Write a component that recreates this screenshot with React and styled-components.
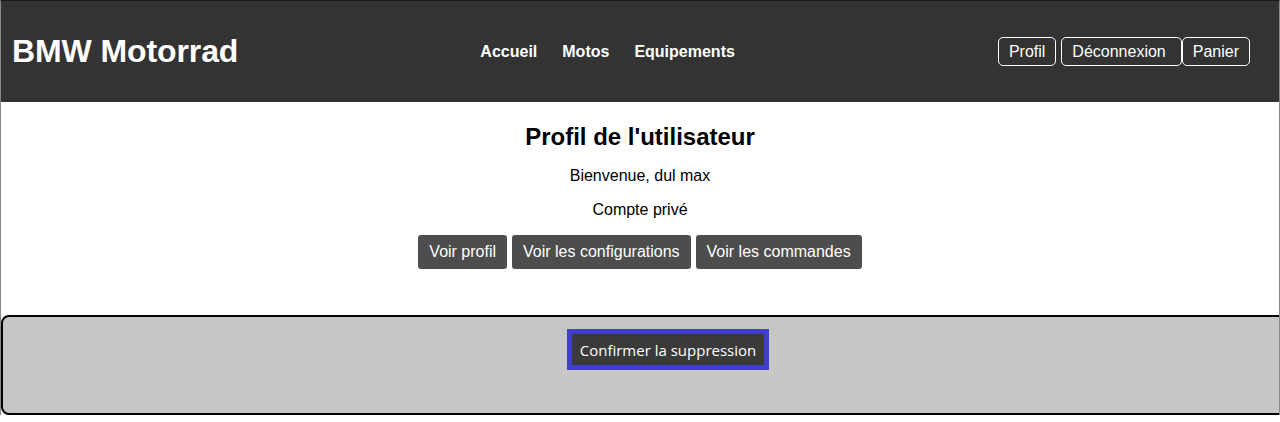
import React from "react";
import styled, { createGlobalStyle } from "styled-components";

const Global = createGlobalStyle`
  html, body { margin: 0; padding: 0; background: #fff; }
  body { font-family: "Liberation Sans", Arial, sans-serif; font-size: 16px; color: #000; }
`;

const Frame = styled.div`
  border-top: 1px solid #1a1a1a;
  border-left: 1px solid #8a8a8a;
  border-right: 1px solid #8a8a8a;
  overflow: hidden;
  height: 414px;
`;

const Header = styled.header`
  display: flex;
  align-items: center;
  justify-content: space-between;
  height: 101px;
  padding: 0 29px 0 11px;
  background: #333333;
  color: #fff;
`;

const Brand = styled.h1`
  margin: 0;
  font-size: 32px;
  font-weight: bold;
  color: #fff;
  letter-spacing: -0.1px;
`;

const Nav = styled.nav`
  display: flex;
  gap: 25px;
  padding-right: 21px;
  padding-top: 1px;
`;

const NavLink = styled.a`
  color: #fff;
  font-weight: bold;
  font-size: 16px;
  text-decoration: none;
`;

const Actions = styled.div`
  display: flex;
  align-items: center;
`;

const OutlineButton = styled.a`
  display: inline-block;
  box-sizing: border-box;
  height: 29px;
  line-height: 27px;
  padding: 0 ${(p) => p.$padRight || 10}px 0 10px;
  margin-right: ${(p) => p.$gap || 0}px;
  border: 1px solid #fff;
  border-radius: 5px;
  color: #fff;
  font-size: 16px;
  text-decoration: none;
`;

const Main = styled.main`
  text-align: center;
`;

const Title = styled.h2`
  margin: 21px 0 16px;
  font-size: 24px;
  font-weight: bold;
`;

const Line = styled.p`
  margin: 16px 0;
  font-size: 16px;
`;

const ButtonRow = styled.div`
  display: flex;
  justify-content: center;
  gap: 5px;
`;

const DarkButton = styled.button`
  height: 34px;
  padding: 0 11px;
  border: none;
  border-radius: 3px;
  background: #4d4d4d;
  color: #fff;
  font-family: "Liberation Sans", Arial, sans-serif;
  font-size: 16px;
`;

const Card = styled.section`
  box-sizing: content-box;
  width: 100%;
  height: 84px;
  margin-top: 46px;
  padding: 12px 26px 0;
  border: 2px solid #000;
  border-radius: 8px;
  background: #c6c6c6;
  display: flex;
  justify-content: center;
  align-items: flex-start;
`;

const ConfirmButton = styled.button`
  height: 41px;
  padding: 0 8px;
  border: 5px solid #3f3fc9;
  border-radius: 0;
  background: #3a3a3a;
  color: #fff;
  font-family: "Open Sans", "Noto Sans", sans-serif;
  font-size: 15px;
`;

export default function App() {
  return (
    <>
      <Global />
      <Frame>
        <Header>
          <Brand>BMW Motorrad</Brand>
          <Nav>
            <NavLink href="#">Accueil</NavLink>
            <NavLink href="#">Motos</NavLink>
            <NavLink href="#">Equipements</NavLink>
          </Nav>
          <Actions>
            <OutlineButton href="#" $gap={5}>Profil</OutlineButton>
            <OutlineButton href="#" $padRight={15}>Déconnexion</OutlineButton>
            <OutlineButton href="#">Panier</OutlineButton>
          </Actions>
        </Header>
        <Main>
          <Title>Profil de l'utilisateur</Title>
          <Line>Bienvenue, dul max</Line>
          <Line>Compte privé</Line>
          <ButtonRow>
            <DarkButton>Voir profil</DarkButton>
            <DarkButton>Voir les configurations</DarkButton>
            <DarkButton>Voir les commandes</DarkButton>
          </ButtonRow>
        </Main>
        <Card>
          <ConfirmButton>Confirmer la suppression</ConfirmButton>
        </Card>
      </Frame>
    </>
  );
}
